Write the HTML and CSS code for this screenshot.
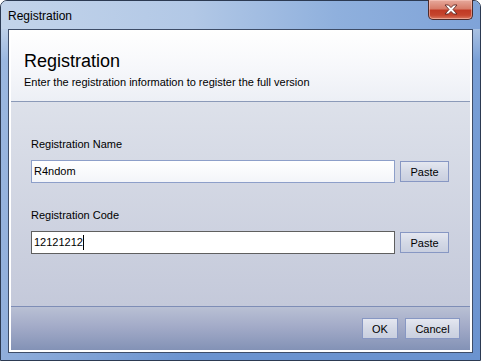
FILE: index.html
```html
<!DOCTYPE html>
<html>
<head>
<meta charset="utf-8">
<link rel="stylesheet" href="styles.css">
</head>
<body>
<div class="window">
  <div class="titlebar">
    <span class="title">Registration</span>
    <div class="close">
      <svg width="16" height="11" viewBox="0 0 16 11">
        <path d="M2 1 L5.5 1 L8 3.6 L10.5 1 L14 1 L10 5.5 L14 10 L10.5 10 L8 7.4 L5.5 10 L2 10 L6 5.5 Z" fill="#fff" stroke="#5b2520" stroke-width="0.9" stroke-linejoin="round"/>
      </svg>
    </div>
  </div>
  <div class="client">
    <div class="header">
      <div class="h-title">Registration</div>
      <div class="h-sub">Enter the registration information to register the full version</div>
    </div>
    <div class="body">
      <div class="field">
        <div class="label">Registration Name</div>
        <div class="row">
          <div class="input">R4ndom</div>
          <div class="btn paste">Paste</div>
        </div>
      </div>
      <div class="field">
        <div class="label">Registration Code</div>
        <div class="row">
          <div class="input focused">12121212<span class="caret"></span></div>
          <div class="btn paste">Paste</div>
        </div>
      </div>
    </div>
    <div class="footer">
      <div class="btn ok">OK</div>
      <div class="btn cancel">Cancel</div>
    </div>
  </div>
</div>
</body>
</html>
```

FILE: styles.css
```css
* { box-sizing: border-box; }
html, body { margin: 0; padding: 0; background: #fff; }
body { font-family: "Liberation Sans", Arial, sans-serif; font-size: 11px; color: #000; }

.window {
  width: 481px;
  height: 361px;
  border: 1px solid #2c3a52;
  border-radius: 7px 7px 0 0;
  padding: 0 7px 7px 7px;
  display: flex;
  flex-direction: column;
  background:
    linear-gradient(90deg, rgba(255,255,255,0.25), rgba(255,255,255,0) 40%),
    linear-gradient(180deg, #b9cde6 0px, #a9c1e2 28px, #7aa0d6 60px, #6b93cf 100%);
}

.titlebar {
  height: 28px;
  display: flex;
  align-items: flex-start;
  justify-content: space-between;
  flex-shrink: 0;
  background: linear-gradient(90deg, #c3d4ea 0%, #b2c8e6 40%, #8fb0dd 70%, #7fa3d8 100%);
  margin: 0 -7px;
  padding: 0 7px 0 7px;
  border-radius: 6px 6px 0 0;
}
.title {
  font-size: 12px;
  line-height: 12px;
  margin-top: 9px;
  color: #000;
}
.close {
  width: 45px;
  height: 20px;
  margin-top: -1px;
  margin-right: 0;
  border: 1px solid #4d2b2b;
  border-top: none;
  border-radius: 0 0 5px 5px;
  background: linear-gradient(180deg, #e6a99c 0%, #d77d6a 45%, #c03a25 55%, #c5452e 80%, #d97860 100%);
  display: flex;
  align-items: center;
  justify-content: center;
  box-shadow: inset 0 0 0 1px rgba(255,210,200,0.5);
}

.client {
  flex: 1;
  border: 1px solid #3e4d68;
  padding: 0 2px 2px 2px;
  background: #fff;
  display: flex;
  flex-direction: column;
}

.header {
  height: 72px;
  padding: 22px 0 0 13px;
  border-bottom: 1px solid #8b9ab8;
  background: linear-gradient(180deg, #ffffff 0%, #f7f8fb 50%, #eceff5 100%);
  flex-shrink: 0;
}
.h-title {
  font-size: 18px;
  line-height: 18px;
  color: #000;
}
.h-sub {
  margin-top: 7px;
  font-size: 11px;
  line-height: 11px;
  color: #000;
}

.body {
  flex: 1;
  padding: 37px 19px 0 20px;
  background: linear-gradient(180deg, #dde1ea 0%, #c4c9da 100%);
  border-bottom: 1px solid #7e8db6;
  display: flex;
  flex-direction: column;
  gap: 27px;
}
.label {
  font-size: 11px;
  line-height: 11px;
  margin-bottom: 10px;
}
.row {
  display: flex;
  align-items: center;
  gap: 5px;
}
.input {
  width: 364px;
  height: 23px;
  border: 1px solid #8d9fc9;
  background: linear-gradient(180deg, #ffffff, #f3f5f9);
  padding: 0 0 0 2px;
  line-height: 21px;
  font-size: 11px;
  display: flex;
  align-items: center;
}
.input.focused {
  border-color: #5f5f5f;
  background: #fff;
}
.caret {
  display: inline-block;
  width: 1px;
  height: 15px;
  background: #000;
}
.btn {
  height: 21px;
  border: 1px solid #8797c3;
  background: linear-gradient(180deg, #e4e7f0 0%, #d4d9e6 50%, #c9cfdf 100%);
  display: flex;
  align-items: center;
  justify-content: center;
  font-size: 11px;
}
.paste { width: 49px; }

.footer {
  height: 43px;
  flex-shrink: 0;
  background: linear-gradient(180deg, #b9c0d4 0%, #a3abc8 45%, #8392b6 100%);
  display: flex;
  justify-content: flex-end;
  align-items: flex-start;
  gap: 7px;
  padding: 11px 10px 0 0;
}
.ok { width: 36px; }
.cancel { width: 55px; }
```
